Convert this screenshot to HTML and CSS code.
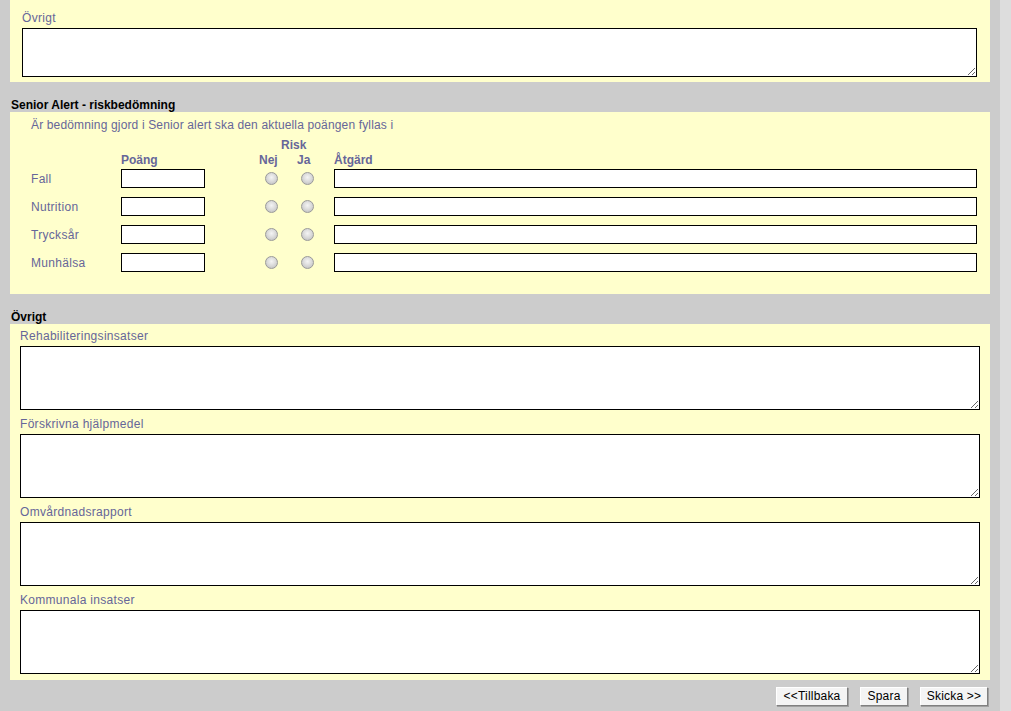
FILE: index.html
```html
<!DOCTYPE html>
<html lang="sv">
<head>
<meta charset="utf-8">
<title>Formulär</title>
<link rel="stylesheet" href="styles.css">
</head>
<body>
<div class="page">
  <div class="main">
    <section class="panel panel-top">
      <div class="lbl">Övrigt</div>
      <textarea class="ta ta-top"></textarea>
    </section>

    <h2 class="heading">Senior Alert - riskbedömning</h2>
    <section class="panel panel-risk">
      <div class="intro">Är bedömning gjord i Senior alert ska den aktuella poängen fyllas i</div>
      <div class="grid">
        <div class="h risk">Risk</div>
        <div class="h hd c-poang">Poäng</div>
        <div class="h hd c-nej hn">Nej</div>
        <div class="h hd c-ja hj">Ja</div>
        <div class="h hd c-atg">Åtgärd</div>

        <div class="rl r1">Fall</div>
        <input class="in c-poang r1" type="text">
        <span class="c-nej rc r1"><input class="rb" type="radio" name="r1"></span>
        <span class="c-ja rc r1"><input class="rb" type="radio" name="r1"></span>
        <input class="in c-atg r1" type="text">

        <div class="rl r2">Nutrition</div>
        <input class="in c-poang r2" type="text">
        <span class="c-nej rc r2"><input class="rb" type="radio" name="r2"></span>
        <span class="c-ja rc r2"><input class="rb" type="radio" name="r2"></span>
        <input class="in c-atg r2" type="text">

        <div class="rl r3">Trycksår</div>
        <input class="in c-poang r3" type="text">
        <span class="c-nej rc r3"><input class="rb" type="radio" name="r3"></span>
        <span class="c-ja rc r3"><input class="rb" type="radio" name="r3"></span>
        <input class="in c-atg r3" type="text">

        <div class="rl r4">Munhälsa</div>
        <input class="in c-poang r4" type="text">
        <span class="c-nej rc r4"><input class="rb" type="radio" name="r4"></span>
        <span class="c-ja rc r4"><input class="rb" type="radio" name="r4"></span>
        <input class="in c-atg r4" type="text">
      </div>
    </section>

    <h2 class="heading">Övrigt</h2>
    <section class="panel panel-other">
      <div class="lbl">Rehabiliteringsinsatser</div>
      <textarea class="ta ta-big"></textarea>
      <div class="lbl">Förskrivna hjälpmedel</div>
      <textarea class="ta ta-big"></textarea>
      <div class="lbl">Omvårdnadsrapport</div>
      <textarea class="ta ta-big"></textarea>
      <div class="lbl">Kommunala insatser</div>
      <textarea class="ta ta-big ta-last"></textarea>
    </section>

    <div class="buttons">
      <button class="btn btn-back" type="button">&lt;&lt;Tillbaka</button>
      <button class="btn btn-save" type="button">Spara</button>
      <button class="btn btn-send" type="button">Skicka &gt;&gt;</button>
    </div>
  </div>
  <div class="rail"></div>
</div>
</body>
</html>
```

FILE: styles.css
```css
html, body {
  margin: 0;
  padding: 0;
  background: #cccccc;
  height: 100%;
  overflow: hidden;
}

body {
  font-family: "Liberation Sans", Arial, sans-serif;
  font-size: 12px;
  color: #666699;
}

.page {
  display: flex;
  min-height: 711px;
}

.main {
  width: 980px;
  padding: 0 10px;
  background: #cccccc;
}

.rail {
  flex: 1;
  background: #dddddd;
}

.panel {
  background: #ffffcc;
  display: flex;
  flex-direction: column;
}

.lbl {
  line-height: 14px;
  height: 14px;
  letter-spacing: 0.3px;
  margin-bottom: 3px;
  padding-top: 1px;
  margin-top: -1px;
}

.ta {
  display: block;
  box-sizing: border-box;
  border: 1px solid #000;
  background: #fff;
  margin: 0;
  padding: 2px;
  font-family: "Liberation Sans", Arial, sans-serif;
  font-size: 12px;
  resize: both;
  outline: none;
}

.panel-top {
  padding: 11px 13px 5px 12px;
}

.ta-top {
  width: 955px;
  height: 49px;
}

.heading {
  margin: 15px 0 0 1px;
  padding-top: 1px;
  font-size: 12px;
  line-height: 14px;
  height: 14px;
  font-weight: bold;
  color: #000;
}

.panel-risk {
  padding: 6px 13px 22px 21px;
}

.intro {
  line-height: 14px;
  letter-spacing: 0.15px;
}

.grid {
  display: grid;
  grid-template-columns: 90px 84px 51px 30px 6px 30px 12px 1fr;
  grid-template-rows: 15px 17px 28px 28px 28px 19px;
  margin-top: 5px;
}

.h {
  font-weight: bold;
  line-height: 15px;
  align-self: start;
}

.risk {
  grid-column: 4 / 7;
  grid-row: 1;
  padding-left: 25px;
  padding-top: 1px;
  line-height: 14px;
}

.hd {
  grid-row: 2;
  padding-top: 1px;
}

.c-poang { grid-column: 2; }
.c-nej { grid-column: 4; }
.c-ja { grid-column: 6; }
.c-atg { grid-column: 8; }

.r1 { grid-row: 3; }
.r2 { grid-row: 4; }
.r3 { grid-row: 5; }
.r4 { grid-row: 6; }

.hn { padding-left: 3px; }
.hj { padding-left: 5px; }

.rl {
  grid-column: 1;
  line-height: 19px;
  padding-top: 1px;
  letter-spacing: 0.3px;
  align-self: start;
}

.in {
  box-sizing: border-box;
  height: 19px;
  border: 1px solid #000;
  background: #fff;
  margin: 0;
  padding: 1px 2px;
  font-family: "Liberation Sans", Arial, sans-serif;
  font-size: 12px;
  outline: none;
  width: 100%;
  align-self: start;
}

.rc {
  display: flex;
  align-items: center;
  justify-content: center;
  height: 19px;
  align-self: start;
}

.rb {
  appearance: none;
  -webkit-appearance: none;
  width: 13px;
  height: 13px;
  margin: 0;
  border-radius: 50%;
  border: 1px solid #9a9a9a;
  background: radial-gradient(circle at 50% 40%, #f4f4f4 0, #dcdcdc 45%, #b9b9b9 100%);
  box-sizing: border-box;
}

.panel-other {
  padding: 5px 10px 6px 10px;
}

.ta-big {
  width: 960px;
  height: 64px;
  margin-bottom: 7px;
}

.ta-last {
  margin-bottom: 0;
}

.buttons {
  display: flex;
  justify-content: flex-end;
  gap: 12px;
  padding: 7px 2px 0 0;
}

.btn {
  font-family: "Liberation Sans", Arial, sans-serif;
  font-size: 12px;
  letter-spacing: 0.2px;
  color: #000;
  background: #f4f4f4;
  height: 19px;
  padding: 0;
  margin: 0;
  border: 1px solid;
  border-color: #ffffff #808080 #808080 #ffffff;
  box-shadow: 1px 1px 0 #a0a0a0;
  line-height: 15px;
  text-align: center;
}

.btn-back { width: 72px; }
.btn-save { width: 48px; }
.btn-send { width: 68px; }
```
